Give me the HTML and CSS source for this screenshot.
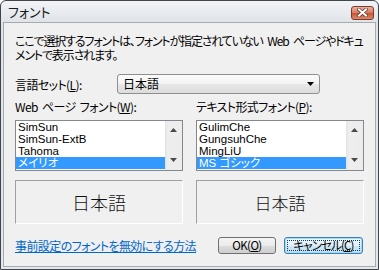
FILE: index.html
```html
<!DOCTYPE html>
<html lang="ja">
<head>
<meta charset="utf-8">
<title>フォント</title>
<link rel="stylesheet" href="styles.css">
</head>
<body>
<div class="window">
  <div class="titlebar">
    <span class="title">フォント</span>
    <span class="close">
      <svg width="11" height="9" viewBox="0 0 11 9">
        <path d="M2 1.5 L9 7.5 M9 1.5 L2 7.5" stroke="#6b3a30" stroke-width="3.6" stroke-linecap="square" fill="none"/>
        <path d="M2 1.5 L9 7.5 M9 1.5 L2 7.5" stroke="#ffffff" stroke-width="2" stroke-linecap="square" fill="none"/>
      </svg>
    </span>
  </div>
  <div class="client">
    <p class="intro">ここで選択するフォントは、フォントが指定されていない Web ページやドキュ<br>メントで表示されます。</p>
    <div class="langrow">
      <span class="langlabel">言語セット(<u>L</u>):</span>
      <div class="combo">
        <span class="combotext">日本語</span>
        <svg class="comboarrow" width="7" height="4" viewBox="0 0 7 4"><path d="M0 0 H7 L3.5 4 Z" fill="#000"/></svg>
      </div>
    </div>
    <div class="cols">
      <div class="col">
        <div class="label">Web ページ フォント(<u>W</u>):</div>
        <div class="listbox">
          <ul class="items">
            <li>SimSun</li>
            <li>SimSun-ExtB</li>
            <li>Tahoma</li>
            <li class="sel">メイリオ</li>
          </ul>
          <div class="scroll">
            <svg width="7" height="4" viewBox="0 0 7 4"><path d="M0 4 H7 L3.5 0 Z" fill="#4a4a4a"/></svg>
            <svg width="7" height="4" viewBox="0 0 7 4"><path d="M0 0 H7 L3.5 4 Z" fill="#4a4a4a"/></svg>
          </div>
        </div>
        <div class="preview preview-web">日本語</div>
      </div>
      <div class="col">
        <div class="label">テキスト形式フォント(<u>P</u>):</div>
        <div class="listbox">
          <ul class="items">
            <li>GulimChe</li>
            <li>GungsuhChe</li>
            <li>MingLiU</li>
            <li class="sel">MS ゴシック</li>
          </ul>
          <div class="scroll">
            <svg width="7" height="4" viewBox="0 0 7 4"><path d="M0 4 H7 L3.5 0 Z" fill="#4a4a4a"/></svg>
            <svg width="7" height="4" viewBox="0 0 7 4"><path d="M0 0 H7 L3.5 4 Z" fill="#4a4a4a"/></svg>
          </div>
        </div>
        <div class="preview preview-text">日本語</div>
      </div>
    </div>
    <div class="footer">
      <a class="link" href="#">事前設定のフォントを無効にする方法</a>
      <div class="buttons">
        <button class="btn ok">OK(<u>O</u>)</button>
        <button class="btn cancel"><span class="focusrect">キャンセル(<u>C</u>)</span></button>
      </div>
    </div>
  </div>
</div>
</body>
</html>
```

FILE: styles.css
```css
* { box-sizing: border-box; }
html, body { margin: 0; padding: 0; }
body {
  width: 379px;
  height: 270px;
  overflow: hidden;
  background: #ffffff;
  font-family: "Noto Sans CJK JP", sans-serif;
  font-size: 12px;
  color: #000;
  font-feature-settings: "palt";
  letter-spacing: -0.6px;
  word-spacing: 2px;
}
.window {
  width: 379px;
  height: 270px;
  border: 1px solid #3f454b;
  border-radius: 6px 6px 0 0;
  background: linear-gradient(#f1f3f6, #dfe3e8 22px, #e4e7eb);
  padding: 0 2px 2px 2px;
  display: flex;
  flex-direction: column;
}
.titlebar {
  height: 21px;
  flex: none;
  display: flex;
  align-items: center;
  justify-content: space-between;
  padding: 0 2px 0 5px;
}
.title {
  font-size: 13px;
  line-height: 1;
  color: #1a1a1a;
  letter-spacing: 0;
}
.close {
  width: 23px;
  height: 14px;
  margin-top: 2px;
  border: 1px solid #7d3b2e;
  border-radius: 3px;
  background: linear-gradient(#eab2a0, #d8795d 50%, #c6532f 50%, #d98a6a);
  display: flex;
  align-items: center;
  justify-content: center;
}
.client {
  flex: 1;
  border: 1px solid #a4abb3;
  background: #f0f0f0;
  padding: 11px 11px 0 11px;
}
.intro {
  margin: 0;
  line-height: 14px;
  white-space: nowrap;
  letter-spacing: -1.15px;
  word-spacing: 3px;
}
.langrow {
  margin-top: 12px;
  display: flex;
  align-items: center;
  height: 20px;
}
.langlabel {
  width: 102px;
  flex: none;
}
.combo {
  width: 203px;
  height: 20px;
  border: 1px solid #8e8f8f;
  border-radius: 3px;
  background: linear-gradient(#fbfbfb, #f3f3f3 50%, #e8e8e8 50%, #dcdcdc);
  display: flex;
  align-items: center;
  justify-content: space-between;
  padding: 0 5px 0 5px;
}
.combotext { line-height: 1; letter-spacing: 0; }
.cols {
  margin-top: 6px;
  display: grid;
  grid-template-columns: 168px 168px;
  column-gap: 13px;
}
.label {
  line-height: 14px;
  margin-bottom: 6px;
  white-space: nowrap;
}
.listbox {
  height: 51px;
  border: 1px solid #828790;
  background: #fff;
  display: flex;
}
.items {
  list-style: none;
  margin: 0;
  padding: 0;
  flex: 1;
  font-family: "Liberation Sans", "Noto Sans CJK JP", sans-serif;
  font-size: 11.5px;
  letter-spacing: 0;
  word-spacing: 0;
}
.items li {
  height: 12px;
  line-height: 12px;
  padding-left: 2px;
  white-space: nowrap;
}
.items li.sel {
  background: #3399ff;
  color: #fff;
}
.scroll {
  width: 17px;
  flex: none;
  background: linear-gradient(90deg, #e3e3e3, #eeeeee 3px, #ececec);
  display: flex;
  flex-direction: column;
  align-items: center;
  justify-content: space-between;
  padding: 7px 0 8px 0;
}
.preview {
  margin-top: 9px;
  height: 44px;
  border-top: 1px solid #a0a0a0;
  border-left: 1px solid #a0a0a0;
  border-right: 1px solid #ffffff;
  border-bottom: 1px solid #ffffff;
  display: flex;
  align-items: center;
  justify-content: center;
  font-feature-settings: normal;
  letter-spacing: 0;
  color: #111;
}
.preview-web { font-size: 18px; font-weight: 300; }
.preview-text { font-size: 17px; font-weight: 300; }
.footer {
  margin-top: 13px;
  height: 17px;
  display: flex;
  align-items: center;
  justify-content: space-between;
  padding-right: 1px;
}
.link {
  color: #0066cc;
  text-decoration: underline;
  line-height: 1;
}
.buttons {
  display: flex;
  gap: 8px;
}
.btn {
  height: 17px;
  padding: 0;
  border: 1px solid #707070;
  border-radius: 3px;
  background: linear-gradient(#f4f4f4, #ebebeb 50%, #dddddd 50%, #cfcfcf);
  font-family: "Noto Sans CJK JP", sans-serif;
  font-size: 11.5px;
  font-feature-settings: "palt";
  letter-spacing: -0.6px;
  color: #000;
  line-height: 1;
  display: flex;
  align-items: center;
  justify-content: center;
}
.ok { width: 58px; }
.cancel {
  width: 79px;
  border-color: #3c7fb1;
  background: linear-gradient(#eef7fc, #e1f0f9 50%, #cfe7f5 50%, #c0e0f2);
  box-shadow: inset 0 0 0 1px #9fdcf5;
}
.focusrect {
  display: flex;
  align-items: center;
  justify-content: center;
  width: 73px;
  height: 11px;
  border: 1px dotted #1d3b4d;
  letter-spacing: -0.9px;
}
```
